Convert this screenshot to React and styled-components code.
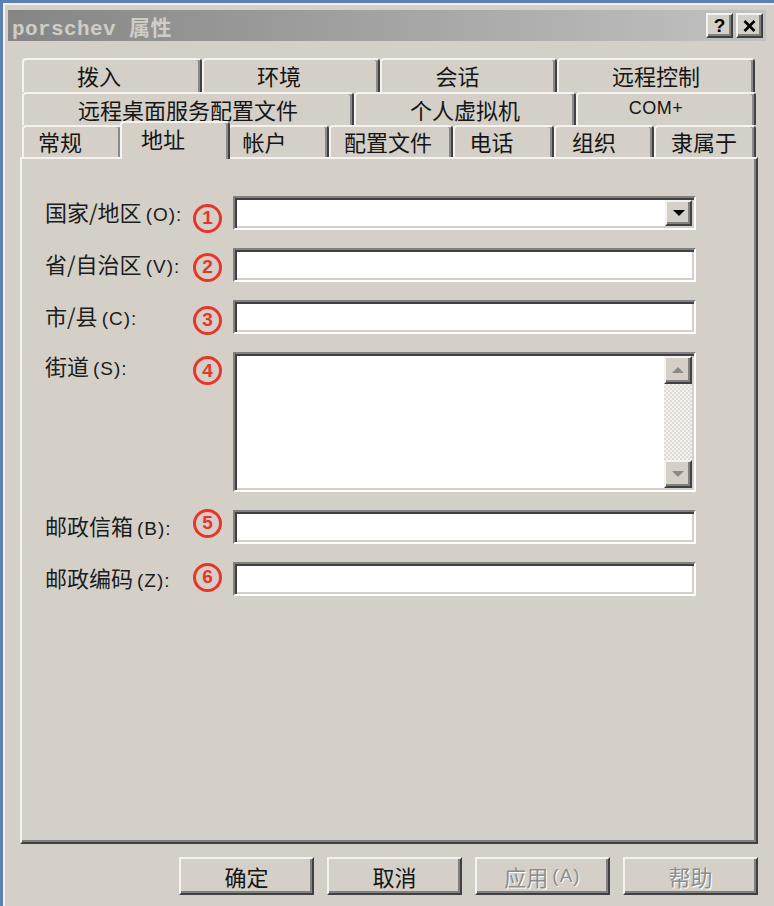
import React from "react";
import styled, { createGlobalStyle, css } from "styled-components";

const Global = createGlobalStyle`
  html, body { margin: 0; height: 100%; overflow: hidden; }
  body {
    background: #5b7fb0;
    padding: 3px 0 0 3px;
    box-sizing: border-box;
    font-family: "Noto Sans CJK SC", "Liberation Sans", sans-serif;
  }
`;

const raised = css`
  border: 2px solid;
  border-color: #f4f3ef #404040 #404040 #f4f3ef;
  box-shadow: inset -2px -2px 0 #808080;
`;

const Window = styled.div`
  box-sizing: border-box;
  width: 771px;
  height: 903px;
  background: #d4d0c8;
  border-top: 2px solid #f2f1ec;
  border-left: 2px solid #f2f1ec;
  padding: 5px 8px 0 3px;
`;

const TitleBar = styled.div`
  height: 31px;
  display: flex;
  align-items: center;
  padding: 0 3px;
  background: linear-gradient(to right, #858585, #c2c2c2);
`;

const Title = styled.span`
  font-family: "Liberation Mono", "Noto Sans CJK SC", monospace;
  font-weight: bold;
  font-size: 21px;
  letter-spacing: 0.4px;
  color: #cfcdc8;
  padding-left: 1px;
`;

const TitleButtons = styled.div`
  margin-left: auto;
  display: flex;
  gap: 3px;
`;

const CaptionButton = styled.div`
  box-sizing: border-box;
  width: 27px;
  height: 25px;
  background: #d4d0c8;
  ${raised};
  display: flex;
  align-items: center;
  justify-content: center;
  font: bold 19px "Liberation Sans", sans-serif;
  color: #000;
`;

const Client = styled.div`
  padding: 17px 8px 0 12px;
`;

const TabRow = styled.div`
  display: flex;
  align-items: flex-start;
  height: ${(p) => p.$h}px;
  padding-left: 2px;
`;

const Tab = styled.div`
  box-sizing: border-box;
  flex: none;
  width: ${(p) => p.$w}px;
  height: ${(p) => p.$h}px;
  border-left: 2px solid #f4f3ef;
  border-top: 2px solid #f4f3ef;
  border-right: 2px solid #404040;
  box-shadow: inset -2px 0 0 #8a8a8a;
  border-radius: 4px 4px 0 0;
  background: #d4d0c8;
  display: flex;
  align-items: center;
  justify-content: center;
  font-size: 22px;
  color: #151515;
  padding-bottom: 2px;
  padding-right: ${(p) => p.$dx * 2}px;
  ${(p) =>
    p.$active &&
    css`
      position: relative;
      z-index: 1;
      height: ${p.$h + 6}px;
      width: ${p.$w + 4}px;
      margin: -4px -2px -2px;
      padding-bottom: 6px;
    `}
`;

const Panel = styled.div`
  box-sizing: border-box;
  height: 687px;
  border: 2px solid;
  border-color: #f4f3ef #404040 #404040 #f4f3ef;
  box-shadow: inset -2px -2px 0 #808080;
  padding: 37px 0 0 23px;
`;

const Form = styled.div`
  display: grid;
  grid-template-columns: 148px 40px 463px;
  grid-template-rows: 34px 34px 34px 140px 34px 34px;
  row-gap: 18px;
`;

const Label = styled.div`
  align-self: ${(p) => (p.$top ? "start" : "center")};
  font-size: 22px;
  line-height: 26px;
  color: #1c1c1c;
  white-space: nowrap;
`;

const Key = styled.span`
  font-family: "Liberation Sans", sans-serif;
  font-size: 19px;
  margin-left: 4px;
  letter-spacing: 1px;
`;

const Mono = styled.span`
  font-family: "Liberation Sans", sans-serif;
  font-size: 18px;
  letter-spacing: 0.5px;
`;

const Badge = styled.span`
  box-sizing: border-box;
  width: 29px;
  height: 29px;
  border-radius: 50%;
  border: 3px solid #e8342a;
  color: #e8342a;
  font: bold 19px "Liberation Sans", sans-serif;
  display: flex;
  align-items: center;
  justify-content: center;
  justify-self: start;
  align-self: ${(p) => (p.$top ? "start" : "center")};
  transform: translateY(${(p) => p.$dy}px);
`;

const sunken = css`
  box-sizing: border-box;
  border: 2px solid;
  border-color: #808080 #fff #fff #808080;
  box-shadow: inset 2px 2px 0 #404040, inset -2px -2px 0 #d4d0c8;
  background: #fff;
`;

const TextBox = styled.div`
  ${sunken};
  height: 100%;
  display: flex;
  justify-content: flex-end;
  padding: 2px;
`;

const DropButton = styled.div`
  box-sizing: border-box;
  width: 27px;
  height: 100%;
  background: #d4d0c8;
  ${raised};
  display: flex;
  align-items: center;
  justify-content: center;
`;

const Arrow = styled.span`
  width: 0;
  height: 0;
  border-left: 6px solid transparent;
  border-right: 6px solid transparent;
  ${(p) =>
    p.$up
      ? css`border-bottom: 6px solid ${p.$c};`
      : css`border-top: 6px solid ${p.$c};`}
`;

const ScrollBar = styled.div`
  width: 28px;
  height: 100%;
  display: flex;
  flex-direction: column;
  background-color: #f2f1ee;
  background-image: repeating-conic-gradient(#dedbd5 0 25%, #f4f3f0 0 50%);
  background-size: 4px 4px;
`;

const ScrollButton = styled(DropButton)`
  width: 28px;
  height: 28px;
`;

const Track = styled.div`
  flex: 1;
`;

const ButtonBar = styled.div`
  display: flex;
  justify-content: flex-end;
  gap: 13px;
  margin-top: 13px;
`;

const PushButton = styled.div`
  box-sizing: border-box;
  width: 135px;
  height: 38px;
  background: #d4d0c8;
  ${raised};
  display: flex;
  align-items: center;
  justify-content: center;
  font-size: 22px;
  color: ${(p) => (p.$disabled ? "#8c8c8c" : "#151515")};
  text-shadow: ${(p) => (p.$disabled ? "1px 1px 0 #fff" : "none")};
`;

const rows = [
  [
    ["拨入", 180, 13],
    ["环境", 178, 12],
    ["会话", 177, 11],
    ["远程控制", 198, 0],
  ],
  [
    ["远程桌面服务配置文件", 332, 0],
    ["个人虚拟机", 222, 0],
    ["COM+", 180, 10],
  ],
  [
    ["常规", 100, 12],
    ["地址", 106, 12, true],
    ["帐户", 101, 14],
    ["配置文件", 124, 3],
    ["电话", 101, 12],
    ["组织", 100, 10],
    ["隶属于", 102, 1],
  ],
];
const rowHeights = [34, 33, 32];

const fields = [
  { label: "国家/地区", key: "(O):", n: 1, dy: 5, kind: "combo" },
  { label: "省/自治区", key: "(V):", n: 2, dy: 2 },
  { label: "市/县", key: "(C):", n: 3, dy: 3 },
  { label: "街道", key: "(S):", n: 4, dy: 4, kind: "area" },
  { label: "邮政信箱", key: "(B):", n: 5, dy: -4 },
  { label: "邮政编码", key: "(Z):", n: 6, dy: -2 },
];

function Field({ kind }) {
  if (kind === "combo")
    return (
      <TextBox>
        <DropButton>
          <Arrow $c="#000" />
        </DropButton>
      </TextBox>
    );
  if (kind === "area")
    return (
      <TextBox>
        <ScrollBar>
          <ScrollButton>
            <Arrow $up $c="#8a8a8a" />
          </ScrollButton>
          <Track />
          <ScrollButton>
            <Arrow $c="#8a8a8a" />
          </ScrollButton>
        </ScrollBar>
      </TextBox>
    );
  return <TextBox />;
}

export default function App() {
  return (
    <>
      <Global />
      <Window>
        <TitleBar>
          <Title>porschev 属性</Title>
          <TitleButtons>
            <CaptionButton>?</CaptionButton>
            <CaptionButton>
              <svg width="13" height="12" viewBox="0 0 13 12">
                <path d="M1.5 1 L11.5 11 M11.5 1 L1.5 11" stroke="#000" strokeWidth="2.6" />
              </svg>
            </CaptionButton>
          </TitleButtons>
        </TitleBar>
        <Client>
          {rows.map((r, i) => (
            <TabRow key={i} $h={rowHeights[i]}>
              {r.map(([t, w, dx, a]) => (
                <Tab key={t} $w={w} $h={rowHeights[i]} $dx={dx} $active={a}>
                  {t === "COM+" ? <Mono>{t}</Mono> : t}
                </Tab>
              ))}
            </TabRow>
          ))}
          <Panel>
            <Form>
              {fields.map((f) => (
                <React.Fragment key={f.n}>
                  <Label $top={f.kind === "area"}>
                    {f.label}
                    <Key>{f.key}</Key>
                  </Label>
                  <Badge $top={f.kind === "area"} $dy={f.dy}>
                    {f.n}
                  </Badge>
                  <Field kind={f.kind} />
                </React.Fragment>
              ))}
            </Form>
          </Panel>
          <ButtonBar>
            <PushButton>确定</PushButton>
            <PushButton>取消</PushButton>
            <PushButton $disabled>
              应用<Key>(A)</Key>
            </PushButton>
            <PushButton $disabled>帮助</PushButton>
          </ButtonBar>
        </Client>
      </Window>
    </>
  );
}
